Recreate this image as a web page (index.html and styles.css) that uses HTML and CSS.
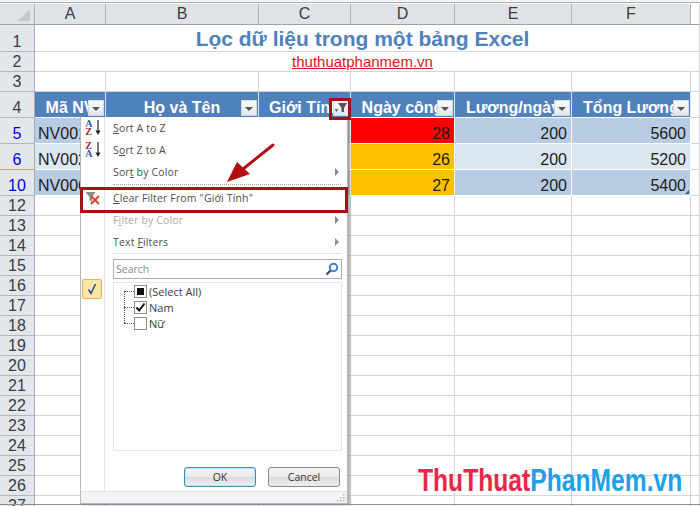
FILE: index.html
```html
<!DOCTYPE html>
<html lang="vi">
<head>
    <meta charset="UTF-8">
    <meta name="viewport" content="width=device-width, initial-scale=1.0">
    <title>Lọc dữ liệu trong một bảng Excel</title>
    <link rel="stylesheet" href="styles.css">
</head>
<body>
<div class="screen">
    <table class="sheet">
        <colgroup>
            <col class="col-head"><col class="col-a"><col class="col-b"><col class="col-c"><col class="col-d"><col class="col-e"><col class="col-f"><col class="col-rest">
        </colgroup>
        <tr class="row-letters">
            <th class="corner"><span class="corner-mark"></span></th>
            <th>A</th><th>B</th><th>C</th><th>D</th><th>E</th><th>F</th><td class="plain"></td>
        </tr>
        <tr class="row-title">
            <th class="num">1</th><td colspan="6" class="title">Lọc dữ liệu trong một bảng Excel</td><td></td>
        </tr>
        <tr class="row-sub">
            <th class="num">2</th><td colspan="6" class="sub"><span class="link">thuthuatphanmem.vn</span></td><td></td>
        </tr>
        <tr class="row-sub">
            <th class="num">3</th><td></td><td></td><td></td><td></td><td></td><td></td><td></td>
        </tr>
        <tr class="row-head">
            <th class="num">4</th>
            <td class="hd">Mã NV<span class="fbtn"></span></td>
            <td class="hd">Họ và Tên<span class="fbtn"></span></td>
            <td class="hd">Giới Tính<span class="fbtn fbtn-on"><svg width="14" height="12" viewBox="0 0 14 12"><path d="M4 1h9L10 6v4H7.500V6z" fill="#555"/><path d="M0.500 7h4L2.500 10z" fill="#666"/></svg></span></td>
            <td class="hd">Ngày công<span class="fbtn"></span></td>
            <td class="hd">Lương/ngày<span class="fbtn"></span></td>
            <td class="hd">Tổng Lương<span class="fbtn"></span></td>
            <td></td>
        </tr>
        <tr class="row-data dark">
            <th class="num hidden-after">5</th><td>NV001</td><td></td><td></td><td class="val red">28</td><td class="val">200</td><td class="val">5600</td><td></td>
        </tr>
        <tr class="row-data light">
            <th class="num hidden-after tan">6</th><td>NV002</td><td></td><td></td><td class="val amber">26</td><td class="val">200</td><td class="val">5200</td><td></td>
        </tr>
        <tr class="row-data dark">
            <th class="num hidden-after">10</th><td>NV006</td><td></td><td></td><td class="val amber">27</td><td class="val">200</td><td class="val last">5400<span class="resize"></span></td><td></td>
        </tr>
        <tr><th class="num">12</th><td></td><td></td><td></td><td></td><td></td><td></td><td></td></tr>
        <tr><th class="num">13</th><td></td><td></td><td></td><td></td><td></td><td></td><td></td></tr>
        <tr><th class="num">14</th><td></td><td></td><td></td><td></td><td></td><td></td><td></td></tr>
        <tr><th class="num">15</th><td></td><td></td><td></td><td></td><td></td><td></td><td></td></tr>
        <tr><th class="num">16</th><td></td><td></td><td></td><td></td><td></td><td></td><td></td></tr>
        <tr><th class="num">17</th><td></td><td></td><td></td><td></td><td></td><td></td><td></td></tr>
        <tr><th class="num">18</th><td></td><td></td><td></td><td></td><td></td><td></td><td></td></tr>
        <tr><th class="num">19</th><td></td><td></td><td></td><td></td><td></td><td></td><td></td></tr>
        <tr><th class="num">20</th><td></td><td></td><td></td><td></td><td></td><td></td><td></td></tr>
        <tr><th class="num">21</th><td></td><td></td><td></td><td></td><td></td><td></td><td></td></tr>
        <tr><th class="num">22</th><td></td><td></td><td></td><td></td><td></td><td></td><td></td></tr>
        <tr><th class="num">23</th><td></td><td></td><td></td><td></td><td></td><td></td><td></td></tr>
        <tr><th class="num">24</th><td></td><td></td><td></td><td></td><td></td><td></td><td></td></tr>
        <tr><th class="num">25</th><td></td><td></td><td></td><td></td><td></td><td></td><td></td></tr>
        <tr><th class="num">26</th><td></td><td></td><td></td><td></td><td></td><td></td><td></td></tr>
        <tr><th class="num">27</th><td></td><td></td><td></td><td></td><td></td><td></td><td></td></tr>
    </table>

    <div class="popup">
        <ul class="menu">
            <li class="item">
                <span class="ico sort-ico"><span class="az"><b class="l-blue">A</b><b class="l-red">Z</b></span><svg width="6" height="16" viewBox="0 0 6 16"><path d="M3 0v12" stroke="#222" stroke-width="1.2"/><path d="M0.5 10.5h5L3 15z" fill="#222"/></svg></span>
                <span class="label"><u>S</u>ort A to Z</span>
            </li>
            <li class="item">
                <span class="ico sort-ico"><span class="az"><b class="l-red">Z</b><b class="l-blue">A</b></span><svg width="6" height="16" viewBox="0 0 6 16"><path d="M3 0v12" stroke="#222" stroke-width="1.2"/><path d="M0.5 10.5h5L3 15z" fill="#222"/></svg></span>
                <span class="label">S<u>o</u>rt Z to A</span>
            </li>
            <li class="item">
                <span class="ico"></span>
                <span class="label">Sor<u>t</u> by Color</span>
                <span class="more"></span>
            </li>
            <li class="sep-dotted"></li>
            <li class="item">
                <span class="ico"><svg width="16" height="15" viewBox="0 0 16 15"><path d="M0.5 1h10L7 6v5L4.500 9V6z" fill="#8c8c8c"/><path d="M6 5l8 8M14 5l-8 8" stroke="#e0402c" stroke-width="2"/></svg></span>
                <span class="label"><u>C</u>lear Filter From "Giới Tính"</span>
            </li>
            <li class="item disabled">
                <span class="ico"></span>
                <span class="label">F<u>i</u>lter by Color</span>
                <span class="more"></span>
            </li>
            <li class="item">
                <span class="ico"></span>
                <span class="label">Text <u>F</u>ilters</span>
                <span class="more"></span>
            </li>
        </ul>
        <div class="filter">
            <div class="gutter"><span class="check-on"><svg width="10" height="12" viewBox="0 0 10 12"><path d="M1.500 6.500L4 10.500 8.500 1" fill="none" stroke="#2b4a86" stroke-width="1.500"/></svg></span></div>
            <div class="panel">
                <div class="rule"></div>
                <div class="search">
                    <span>Search</span>
                    <svg width="14" height="14" viewBox="0 0 14 14"><circle cx="8.500" cy="5.500" r="3.700" fill="none" stroke="#3f83c4" stroke-width="2"/><path d="M5.500 8.500L1.500 12.500" stroke="#27476f" stroke-width="2.200"/></svg>
                </div>
                <div class="list">
                    <div class="tree-row"><span class="dots"></span><span class="box"><span class="mixed"></span></span><span>(Select All)</span></div>
                    <div class="tree-row"><span class="dots"></span><span class="box"><svg width="11" height="11" viewBox="0 0 11 11"><path d="M1.500 5.500L4.200 8.500 9.500 1.500" fill="none" stroke="#111" stroke-width="2"/></svg></span><span>Nam</span></div>
                    <div class="tree-row"><span class="dots"></span><span class="box"></span><span>Nữ</span></div>
                </div>
                <div class="buttons">
                    <button class="btn btn-ok">OK</button>
                    <button class="btn">Cancel</button>
                </div>
            </div>
        </div>
        <div class="grip"><svg width="9" height="9" viewBox="0 0 9 9"><path d="M7 1h1.500v1.500H7zM4 4h1.500v1.500H4zM7 4h1.500v1.500H7zM1 7h1.500v1.500H1zM4 7h1.500v1.500H4zM7 7h1.500v1.500H7z" fill="#b4b8bc"/></svg></div>
    </div>

    <!-- chu thich mau do ve len tren anh -->
    <div class="mark mark-funnel"></div>
    <div class="mark mark-clear"></div>
    <svg class="arrow" width="60" height="50" viewBox="0 0 60 50"><path d="M47 3L17 27" stroke="#b40d14" stroke-width="3" stroke-linecap="round"/><path d="M1 40L11 20 24 32z" fill="#b40d14"/></svg>

    <div class="logo"><span class="logo-red">ThuThuat</span><span class="logo-blue">PhanMem.vn</span></div>
</div>
</body>
</html>
```

FILE: styles.css
```css
html, body { margin: 0; padding: 0; background: #fff; }
.screen { position: relative; width: 700px; height: 506px; overflow: hidden; background: #fff; box-sizing: border-box; padding: 3px 0 0 0; border-top: 1px solid #f0f1f3; font-family: "Liberation Sans", Arial, sans-serif; }
.screen::before { content: ""; position: absolute; left: 0; right: 0; top: 1px; height: 1px; background: #a6a6a6; }
.screen::after { content: ""; position: absolute; left: 0; right: 0; bottom: 1px; height: 1px; background: #8e8e8e; }

.sheet { border-collapse: separate; border-spacing: 0; table-layout: fixed; width: 700px; font-size: 16px; color: #1c1c1c; }
.col-head { width: 35px; }
.col-a { width: 71px; }
.col-b { width: 153px; }
.col-c { width: 92px; }
.col-d { width: 104px; }
.col-e { width: 117px; }
.col-f { width: 119px; }
.col-rest { width: 9px; }

.sheet tr { height: 20px; }
.sheet td, .sheet th { box-sizing: border-box; padding: 0; border-right: 1px solid #d4d5d8; border-bottom: 1px solid #d4d5d8; white-space: nowrap; overflow: hidden; font-weight: normal; line-height: 18px; vertical-align: bottom; }
.sheet th { background: #e3e7ec; color: #3c3c3c; text-align: center; border-right-color: #a9adb3; border-bottom-color: #b3b7bd; }
.sheet .row-letters { height: 21px; }
.row-letters th { vertical-align: middle; background: #dfe3e8; border-bottom-color: #9ea2a8; border-right-color: #b0b4ba; }
.sheet .row-letters .plain { border-bottom-color: #9ea2a8; }
.corner { position: relative; }
.corner-mark { position: absolute; right: 4px; bottom: 3px; width: 0; height: 0; border-left: 12px solid transparent; border-bottom: 12px solid #c3c7cb; }

.sheet .row-title { height: 27px; }
.sheet .row-sub { height: 20px; }
.sheet .row-head { height: 26px; }
.sheet .row-data { height: 26px; }

.sheet .title { font-size: 21px; font-weight: bold; color: #4f81bd; text-align: center; line-height: 24px; }
.sheet .title, .sheet .sub { border-right-color: transparent; }
.sheet .sub { text-align: center; color: #e0141c; font-size: 15px; }
.link { text-decoration: underline; }

.sheet .hd { position: relative; background: #4f81bd; color: #fff; font-weight: bold; font-size: 16px; text-align: center; border-right-color: #dbe4ef; border-bottom-color: #fff; line-height: 18px; }
.fbtn { position: absolute; right: 1px; bottom: 1px; width: 16px; height: 16px; box-sizing: border-box; background: linear-gradient(#fafbfc, #e4e7ea); border: 1px solid #d3d8de; display: flex; align-items: center; justify-content: center; }
.fbtn::before { content: ""; width: 0; height: 0; border-left: 4px solid transparent; border-right: 4px solid transparent; border-top: 4px solid #555; margin-top: 2px; }
.fbtn-on::before { display: none; }

.sheet .row-data td { border-right-color: #fff; border-bottom-color: #fff; padding-left: 3px; }
.row-data.dark td { background: #b8cce4; }
.row-data.light td { background: #dce6f1; }
.sheet .row-data td:last-child { background: #fff; border-right-color: #d4d5d8; border-bottom-color: #d4d5d8; }
.sheet .row-data .val { text-align: right; padding: 0 4px 0 0; }
.sheet .row-data .red { background: #ff0000; }
.sheet .row-data .amber { background: #ffc000; }
.sheet .row-data .last { position: relative; }
.resize { position: absolute; right: 1px; bottom: 1px; width: 0; height: 0; border-left: 4px solid transparent; border-bottom: 4px solid #2f5f9f; }
.sheet .hidden-after { color: #0000e6; }
.sheet .tan { border-bottom-color: #c8a46e; }

.popup { position: absolute; left: 80px; top: 116px; width: 268px; height: 387px; box-sizing: border-box; display: flex; flex-direction: column; background: linear-gradient(90deg, #fff 23px, #e3e5e8 23px, #e3e5e8 24px, #fff 24px); border: 1px solid #b5b7ba; border-top: none; box-shadow: 2px 1px 2px rgba(90, 90, 90, 0.5); font-family: "Open Sans", "Noto Sans", sans-serif; font-size: 10.500px; color: #4e4e4e; }
.menu { list-style: none; margin: 0; padding: 0; }
.item { display: flex; align-items: center; height: 22px; letter-spacing: 0.15px; }
.ico { width: 32px; flex: none; display: flex; align-items: center; justify-content: center; padding-right: 8px; box-sizing: border-box; }
.label { flex: 1; }
.more { width: 0; height: 0; margin-right: 8px; border-top: 4px solid transparent; border-bottom: 4px solid transparent; border-left: 4px solid #8a8a8a; }
.disabled { color: #ababab; }
.sep-dotted { height: 0; margin: 1px 6px 2px 32px; border-top: 1px dotted #a8a8a8; }
.sort-ico { gap: 2px; }
.az { display: flex; flex-direction: column; font-family: "Liberation Serif", serif; font-size: 10px; line-height: 8px; }
.az b { display: block; }
.l-blue { color: #2c5a9e; }
.l-red { color: #9c2c30; }

.filter { flex: 1; display: flex; }
.gutter { width: 24px; flex: none; }
.check-on { display: flex; align-items: center; justify-content: center; box-sizing: border-box; width: 20px; height: 20px; margin: 26px 0 0 1px; background: #fde6a8; border: 1px solid #e8b25c; border-radius: 2px; }
.panel { flex: 1; padding: 0 5px 0 8px; display: flex; flex-direction: column; }
.rule { height: 1px; background: #dfe1e4; }
.search { display: flex; align-items: center; justify-content: space-between; box-sizing: border-box; height: 20px; margin-top: 5px; padding: 0 2px; border: 1px solid #a9b0b6; color: #8a8a8a; }
.list { box-sizing: border-box; height: 169px; margin-top: 3px; padding: 0 0 0 10px; border: 1px solid #e2e4e7; color: #3c3c3c; }
.tree-row { display: flex; align-items: center; height: 16px; position: relative; font-size: 11px; }
.dots { width: 10px; border-top: 1px dotted #555; flex: none; }
.tree-row::before { content: ""; position: absolute; left: 0; top: -8px; height: 16px; border-left: 1px dotted #555; }
.tree-row:first-child::before { top: 8px; height: 8px; }
.box { display: flex; align-items: center; justify-content: center; width: 11px; height: 11px; margin-right: 2px; border: 1px solid #8a8f94; background: #fff; }
.mixed { width: 7px; height: 7px; background: #111; }
.buttons { display: flex; justify-content: flex-end; gap: 12px; margin-top: 16px; padding-right: 2px; }
.btn { box-sizing: border-box; width: 72px; height: 20px; padding: 0; font: inherit; color: #333; background: linear-gradient(#f3f3f3 0%, #ebebeb 48%, #dcdcdc 52%, #efefef 100%); border: 1px solid #8b8b8b; border-radius: 3px; }
.btn-ok { border-color: #3c8fb4; box-shadow: inset 0 0 0 1px #bfe6f5; }
.grip { display: flex; justify-content: flex-end; align-items: flex-end; height: 10px; padding: 0 2px 1px 0; background: #f1f3f5; border-top: 1px solid #dfe1e4; }

.mark { position: absolute; box-sizing: border-box; border: 3px solid #a50f16; }
.mark-funnel { left: 329px; top: 97px; width: 22px; height: 22px; }
.mark-clear { left: 80px; top: 186px; width: 268px; height: 26px; }
.arrow { position: absolute; left: 226px; top: 141px; }

.logo { position: absolute; left: 418px; top: 463px; font-family: "Liberation Sans", Arial, sans-serif; font-weight: bold; font-size: 31px; line-height: 34px; white-space: nowrap; transform: scaleX(0.795); transform-origin: left center; }
.logo-red { color: #e8274b; }
.logo-blue { color: #1f9fe9; }
```
